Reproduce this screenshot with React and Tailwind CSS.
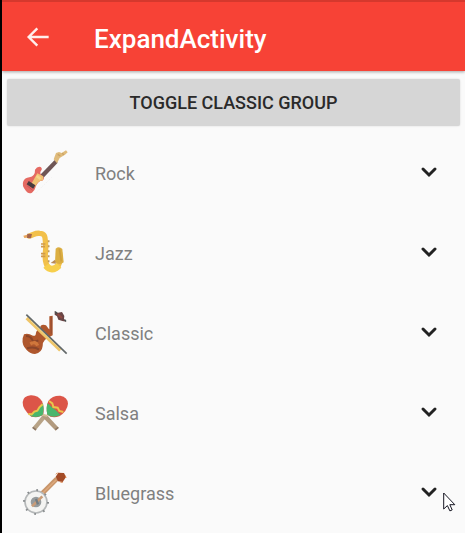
import React from "react";

function Guitar() {
  return (
    <svg viewBox="33 30 144 144" className="size-12" aria-hidden="true">
      <path d="M91 104 L134 60 L143 68 L100 114Z" fill="#6f5656" />
      <path d="M131 58 L138 39 L147 36 L155 39 L168 31 L173 37 L165 44 L149 54 L141 70Z" fill="#dfbb7b" />
      <path d="M143 43 L151 48 M157 39 L161 45" stroke="#c9a265" strokeWidth="4" />
      <path d="M75 89 Q82 78 92 81 Q99 86 92 94 Q88 102 98 108 Q106 116 97 122 Q86 121 79 136 Q75 151 66 158 Q56 164 48 153 Q34 137 40 124 Q44 114 58 112 Q76 108 75 89Z" fill="#e56a62" />
      <path d="M82 100 L100 109 L99 121 Q84 122 75 141 L65 130Z" fill="#f0c273" />
      <path d="M80 108 L92 117" stroke="#f6d68a" strokeWidth="8" />
      <path d="M53 128 L73 141" stroke="#493b3e" strokeWidth="12" />
      <path d="M51 137 L68 151" stroke="#c9565a" strokeWidth="3" />
      <path d="M78 158 L124 113" stroke="#dedede" strokeWidth="2" strokeDasharray="2 5" />
    </svg>
  );
}

function Saxophone() {
  return (
    <svg viewBox="33 30 144 144" className="size-12" aria-hidden="true">
      <path d="M58 48 C72 44 76 38 89 40 C109 40 105 59 107 74 C109 94 101 112 109 132 C113 149 136 152 145 137 C151 127 151 111 148 95" fill="none" stroke="#f2c04a" strokeWidth="16" strokeLinecap="round" />
      <path d="M108 137 Q125 158 147 136" fill="none" stroke="#f7cf4c" strokeWidth="20" />
      <path d="M40 47 L60 42 L63 52 L43 54Z" fill="#e8a65c" />
      <path d="M52 41 L66 42 L63 55 L51 54Z" fill="#a4654d" />
      <path d="M137 86 Q147 77 157 87 L161 127 Q150 137 135 127Z" fill="#dcaf42" />
      <path d="M148 86 L154 124" stroke="#cfa03e" strokeWidth="5" />
      <path d="M93 72 H106 M93 80 H105 M93 101 H106 M93 109 H106" stroke="#d09a4c" strokeWidth="5" />
      <path d="M116 61 V127" stroke="#be9a5c" strokeWidth="5" strokeDasharray="6 9" />
      <path d="M122 129 L135 119 L138 131Z" fill="#b98a56" />
    </svg>
  );
}

function Violin() {
  return (
    <svg viewBox="33 30 144 144" className="size-12" aria-hidden="true">
      <path d="M42 103 Q53 98 69 107 Q77 110 78 98 Q80 88 93 87 L91 79 Q97 72 108 76 L117 88 L118 88 L118 49 L128 47 L128 106 L117 112 L105 119 Q98 126 98 138 Q96 158 75 162 Q61 162 50 150 Q35 136 38 115Z" fill="#af572d" />
      <path d="M48 108 Q62 108 67 120 Q70 129 85 121 M51 145 Q74 139 87 149" fill="none" stroke="#8a452a" strokeWidth="6" />
      <path d="M61 132 Q77 122 83 137" fill="none" stroke="#d0773c" strokeWidth="10" />
      <path d="M124 52 V101" stroke="#9a4f30" strokeWidth="4" />
      <path d="M50 54 L151 151" stroke="#efc568" strokeWidth="10" />
      <path d="M64 62 L154 148" stroke="#f8e1a0" strokeWidth="4" />
      <path d="M49 44 L170 161" stroke="#63696a" strokeWidth="5" />
      <path d="M134 33 L144 38 L156 36 L163 48 L162 56 L169 65 L157 63 L145 59 L141 49 L134 44Z" fill="#6a4545" />
      <path d="M143 42 L156 54" stroke="#8f4a42" strokeWidth="6" />
      <path d="M136 35 L140 41 M164 59 L168 64" stroke="#465454" strokeWidth="4" />
    </svg>
  );
}

function Maracas() {
  return (
    <svg viewBox="33 24 144 144" className="size-12" aria-hidden="true">
      <path d="M67 137 L99 98 L110 105 L77 145Z" fill="#b8a387" />
      <path d="M97 105 L110 98 L146 137 L137 146Z" fill="#b29a7e" />
      <path d="M68 136 L78 144 M136 143 L145 136" stroke="#8e7865" strokeWidth="5" />
      <path d="M64 104 Q37 82 38 60 Q40 42 62 40 Q85 39 96 58 Q103 74 100 97 Q88 109 64 104Z" fill="#dc5548" />
      <path d="M60 101 L72 90 L83 82 L99 64 Q103 80 99 98 Q80 111 60 101Z" fill="#49b66c" />
      <path d="M55 96 L65 97 L73 89 L82 86 L88 76 L98 67" fill="none" stroke="#eac64a" strokeWidth="6" />
      <path d="M112 98 Q107 74 115 57 Q127 40 151 41 Q173 45 174 65 Q172 87 148 103 Q125 110 112 98Z" fill="#dc5548" />
      <path d="M112 98 Q107 76 113 64 L125 75 L139 86 L152 99 Q129 110 112 98Z" fill="#49b66c" />
      <path d="M117 57 L127 64 L130 75 L143 77 L148 87 L160 90" fill="none" stroke="#eac64a" strokeWidth="6" />
      <path d="M98 98 L112 102" stroke="#d4bd94" strokeWidth="6" />
    </svg>
  );
}

function Banjo() {
  return (
    <svg viewBox="33 24 144 144" className="size-12" aria-hidden="true">
      <path d="M86 105 L141 50" stroke="#c8956a" strokeWidth="14" />
      <path d="M90 101 L139 53" stroke="#dda97d" strokeWidth="4" />
      <path d="M137 44 L145 32 L162 33 L168 45 L158 60 L144 58Z" fill="#a34b27" />
      <path d="M143 32 L138 37 M166 41 L168 48 M151 60 L158 61" stroke="#d87b3e" strokeWidth="3" />
      <circle cx="78" cy="120" r="33" fill="#f4f4f2" stroke="#b5b8b9" strokeWidth="5" />
      <circle cx="78" cy="120" r="16" fill="#969b9d" />
      <path d="M66 133 L97 103" stroke="#c99c78" strokeWidth="8" />
      <path d="M78 111 L84 127" stroke="#727c81" strokeWidth="7" />
      <circle cx="78" cy="120" r="36" fill="none" stroke="#85898b" strokeWidth="6" strokeDasharray="5 23.27" />
    </svg>
  );
}

const genres = [
  { name: "Rock", Icon: Guitar },
  { name: "Jazz", Icon: Saxophone },
  { name: "Classic", Icon: Violin },
  { name: "Salsa", Icon: Maracas },
  { name: "Bluegrass", Icon: Banjo },
];

export default function App() {
  return (
    <div className="relative min-h-screen overflow-hidden border-l-2 border-black bg-[#fafafa] font-['Roboto',sans-serif]">
      <header className="flex h-[71px] items-center border-t-2 border-[#d5382d] bg-[#f74236] pl-5 text-white shadow-[0_1px_3px_rgba(0,0,0,0.35)]">
        <button type="button" aria-label="Back" className="flex size-8 items-center justify-center">
          <svg viewBox="0 0 24 24" className="size-8" fill="none" stroke="#ffeeec" strokeWidth="1.8" aria-hidden="true">
            <path d="M20 12H5.5M11.5 5.5L5 12l6.5 6.5" />
          </svg>
        </button>
        <h1 className="ml-10 pt-1 text-[26px] leading-8 font-medium">ExpandActivity</h1>
      </header>
      <main>
        <div className="px-[5px] pt-2">
          <button type="button" className="h-[47px] w-full rounded-xs bg-[#d6d6d6] text-lg font-medium text-[#2a2a2a] shadow-[0_0_2px_rgba(0,0,0,0.15)]">
            TOGGLE CLASSIC GROUP
          </button>
        </div>
        <ul className="pt-2">
          {genres.map(({ name, Icon }) => (
            <li key={name}>
              <button type="button" aria-expanded="false" className="flex h-20 w-full items-center pr-6 pl-[19px] text-left">
                <Icon />
                <span className="ml-[26px] flex-1 text-lg text-[#808080]">{name}</span>
                <svg viewBox="0 0 24 24" className="mb-1 size-6" fill="none" stroke="#222222" strokeWidth="3" strokeLinecap="round" aria-hidden="true">
                  <path d="M6 9l6 6 6-6" />
                </svg>
              </button>
            </li>
          ))}
        </ul>
      </main>
      <svg viewBox="0 0 13 20" className="pointer-events-none absolute top-[492px] left-[441px] h-5 w-[13px]" aria-hidden="true">
        <path d="M.7 1v16l3.7-3.4 2.5 5.3 2.3-1-2.4-5.2h5z" fill="#ffffff" stroke="#141420" strokeWidth="1" />
      </svg>
    </div>
  );
}
